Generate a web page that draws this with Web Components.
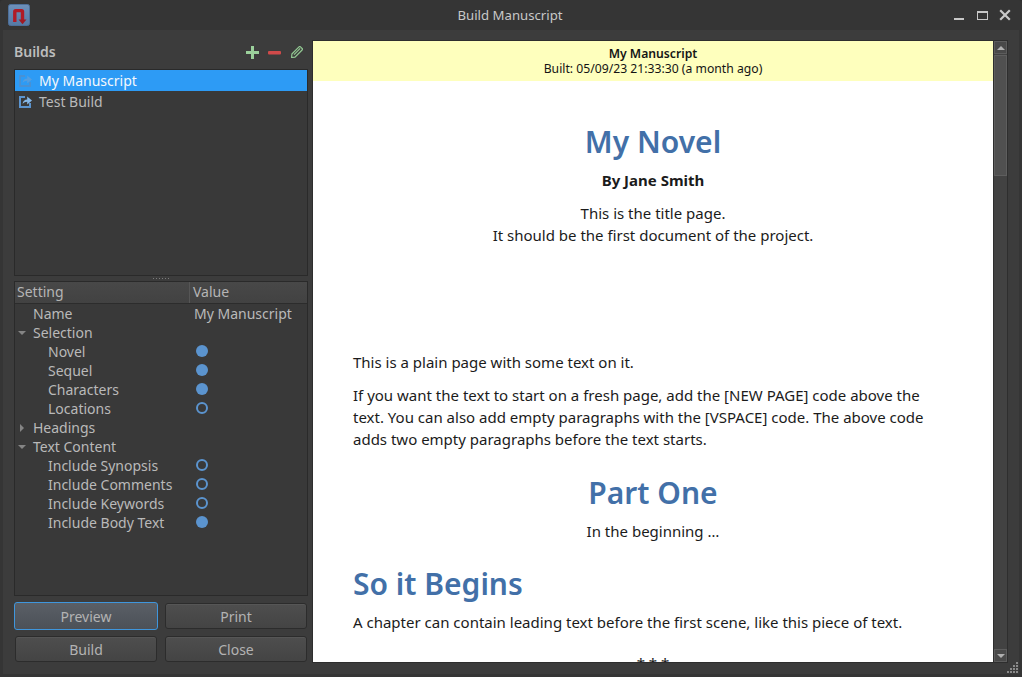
<!DOCTYPE html>
<html><head><meta charset="utf-8">
<style>
html,body{margin:0;padding:0;width:1022px;height:677px;overflow:hidden;background:#2f2f2f;font-family:"Noto Sans",sans-serif}
</style></head><body>
<template id="t-window"><style>
:host{display:flex;flex-direction:column;width:1022px;height:677px;background:#353535;color:#c4c4c4;font:14px "Noto Sans",sans-serif;border-radius:3px 3px 0 0;overflow:hidden}
.body{flex:1;min-height:0;margin:0 3px 3px 3px;background:#3c3c3c;display:flex;padding:11px 12px 12px 11px;position:relative}
.grip{position:absolute;right:0;bottom:0}
</style><slot name="title"></slot><div class="body"><slot></slot><svg class="grip" width="14" height="14" viewBox="0 0 14 14" fill="#8a8a8a"><rect x="11" y="2" width="2" height="2"/><rect x="8" y="5" width="2" height="2"/><rect x="11" y="5" width="2" height="2"/><rect x="5" y="8" width="2" height="2"/><rect x="8" y="8" width="2" height="2"/><rect x="11" y="8" width="2" height="2"/><rect x="2" y="11" width="2" height="2"/><rect x="5" y="11" width="2" height="2"/><rect x="8" y="11" width="2" height="2"/><rect x="11" y="11" width="2" height="2"/></svg></div></template>

<template id="t-title"><style>
:host{display:grid;grid-template-columns:1fr auto 1fr;align-items:center;height:30px;flex:none;padding:0 10px 0 8px;box-sizing:border-box;font-size:13.2px;color:#c8c8c8}
.ctl{display:flex;gap:9px;align-items:center;justify-self:end}
svg{display:block}
</style>
<svg width="22" height="22" viewBox="0 0 22 22"><defs><linearGradient id="g" x1="0" y1="0" x2="0" y2="1"><stop offset="0" stop-color="#6d90ba"/><stop offset="1" stop-color="#567aa5"/></linearGradient></defs><rect x="0.5" y="0.5" width="21" height="21" rx="2" fill="url(#g)" stroke="#4d6f99"/><path d="M6.8 18V7.5Q6.8 6.6 7.7 6.6H13.6Q14.5 6.6 14.5 7.5V16" fill="none" stroke="#b01a26" stroke-width="3.4"/><path d="M10.5 15.6h8l-4 4.6z" fill="#a01a24"/></svg>
<div><slot></slot></div>
<div class="ctl">
<svg width="14" height="14" viewBox="0 0 14 14"><rect x="2" y="10" width="10" height="2" fill="#c8c8c8"/></svg>
<svg width="14" height="14" viewBox="0 0 14 14"><rect x="2.5" y="3.5" width="10" height="8" fill="none" stroke="#c8c8c8"/><rect x="2" y="3" width="11" height="2" fill="#c8c8c8"/></svg>
<svg width="14" height="14" viewBox="0 0 14 14"><path d="M2.2 2.2l9.6 9.6M11.8 2.2l-9.6 9.6" stroke="#c8c8c8" stroke-width="2.2" fill="none"/></svg>
</div></template>

<template id="t-side"><style>
:host{display:flex;flex-direction:column;width:294px;flex:none;font-size:14px}
.head{display:flex;align-items:center;height:28px;box-sizing:border-box;flex:none;color:#bdbdbd;font-weight:600;font-size:14px;padding-bottom:6px}
.head span{flex:1;padding-bottom:2px}
.tools{display:flex;align-items:center;margin-right:5px}
svg{display:block}
.split{height:5px;flex:none;display:flex;justify-content:center;align-items:center}
.split i{width:18px;height:3px;background-image:radial-gradient(#7c7c7c 0.8px,transparent 1px);background-size:3px 3px}
.btns{display:grid;grid-template-columns:142px 142px;column-gap:8px;row-gap:7px;margin-top:7px;padding-left:1px}
</style>
<div class="head"><span>Builds</span><div class="tools">
<svg width="13" height="13" viewBox="0 0 13 13"><path d="M6.5 0v13M0 6.5h13" stroke="#9bd09b" stroke-width="3"/></svg>
<svg width="13" height="13" viewBox="0 0 13 13" style="margin-left:9px"><rect x="0" y="5" width="13" height="3.4" rx="1" fill="#d04a4a"/></svg>
<svg width="12" height="12" viewBox="0 0 12 12" style="margin-left:10px"><g fill="none" stroke="#93c993" stroke-width="1.2"><path d="M.9 8L8 .9c.5-.5 1-.5 1.5 0l1.6 1.6c.5.5.5 1 0 1.5L4 11.1l-3.4.4z"/><path d="M3 8.6L9.2 2.4"/></g></svg>
</div></div>
<slot name="list"></slot>
<div class="split"><i></i></div>
<slot name="tree"></slot>
<div class="btns"><slot name="btn"></slot></div>
</template>

<template id="t-list"><style>
:host{display:block;height:205px;flex:none;background:#393939;border:1px solid #2a2a2a}
</style><slot></slot></template>

<template id="t-item"><style>
:host{display:flex;align-items:center;height:21px;color:#b9b9b9;font-size:14px;padding-left:4px;gap:7px}
:host([selected]){background:#2d9bf5;color:#f4f8fc}
svg{display:block;flex:none}
:host([selected]) svg{opacity:.8}
:host([selected]) .box{stroke:#4f8fcc}
:host([selected]) .arr{fill:#5e9fdc}
</style><svg width="13" height="13" viewBox="0 0 13 13"><path class="box" d="M6 2H1v10h10V8" fill="none" stroke="#5b94cf" stroke-width="2"/><path class="arr" d="M3.6 9c.2-3 2.2-4.6 4.6-4.6V1.6L13 5.5 8.2 9.4V6.8C6.2 6.8 4.8 7.6 3.6 9z" fill="#86b8e8"/></svg><slot></slot></template>

<template id="t-tree"><style>
:host{display:flex;flex-direction:column;flex:1;min-height:0;background:#393939;border:1px solid #2a2a2a;color:#b9b9b9}
.hdr{display:flex;height:21px;flex:none;background:linear-gradient(#484848,#424242);border-bottom:1px solid #2c2c2c;font-size:14px;line-height:20px;color:#b5b5b5}
.hdr span{padding-left:2px;box-sizing:border-box}
.hdr span:first-child{width:175px;border-right:1px solid #565656}
.hdr span:last-child{flex:1;padding-left:3px}
</style><div class="hdr"><span>Setting</span><span>Value</span></div><div><slot></slot></div></template>

<template id="t-row"><style>
:host{display:grid;grid-template-columns:179px 1fr;height:19px;line-height:19px;font-size:14px;color:#b9b9b9}
.l{display:flex;align-items:center;white-space:nowrap}
.a{width:8px;height:19px;flex:none;margin-left:3px;margin-right:7px;display:flex;align-items:center;justify-content:center}
:host([child]) .l{padding-left:15px}
.v{display:flex;align-items:center}
.dot{width:12px;height:12px;border-radius:50%;background:#5b94cf;margin:-1px 0 0 2px;box-sizing:border-box}
:host([value="off"]) .dot{background:none;border:2px solid #5b94cf}
</style><div class="l"><span class="a"></span><slot></slot></div><div class="v"></div></template>

<template id="t-btn"><style>
:host{display:flex;align-items:center;justify-content:center;height:26px;box-sizing:border-box;border:1px solid #2c2c2c;border-radius:3px;background:linear-gradient(#4e4e4e,#444);color:#b3b3b3;font-size:14px;box-shadow:inset 0 1px 0 #565656}
:host([focus]){height:28px;margin:-1px;border-color:#3f96dd;background:linear-gradient(#5a5f66,#4c5158);box-shadow:none}
</style><slot></slot></template>

<template id="t-preview"><style>
:host{display:flex;flex:1;min-width:0;margin-left:5px;overflow:hidden;background:#fff;box-shadow:0 0 0 1px #2e2e2e}
.page{flex:1;min-width:0;display:flex;flex-direction:column;overflow:hidden;color:#1b1b1b}
.banner{flex:none;height:40px;background:#feffbd;text-align:center;color:#141414;font-size:12.2px;line-height:15px;padding-top:5px;box-sizing:border-box}
.banner b{display:block;font-weight:600}
</style><div class="page"><div class="banner"><b>My Manuscript</b>Built: 05/09/23 21:33:30 (a month ago)</div><slot></slot></div><slot name="bar"></slot></template>

<template id="t-doc"><style>
:host{display:block;padding:40px 40px 0;font-size:15px;line-height:22px;color:#1b1b1b}
</style><slot></slot></template>

<template id="t-bar"><style>
:host{display:flex;flex-direction:column;width:14px;flex:none;background:#424242;box-sizing:border-box;border-left:1px solid #2e2e2e}
.b{height:13px;flex:none;background:#494949;border:1px solid #5c5c5c;box-sizing:border-box;display:flex;align-items:center;justify-content:center}
.th{height:121px;flex:none;margin-top:1px;background:#505050;border:1px solid #5e5e5e;box-sizing:border-box}
.sp{flex:1}
i{display:block;width:0;height:0;border-left:4px solid transparent;border-right:4px solid transparent}
.up{border-bottom:4px solid #b0b0b0}.dn{border-top:4px solid #b0b0b0}
</style><div class="b"><i class="up"></i></div><div class="th"></div><div class="sp"></div><div class="b"><i class="dn"></i></div></template>

<app-window>
  <title-bar slot="title">Build Manuscript</title-bar>
  <side-panel>
    <build-list slot="list">
      <build-item selected>My Manuscript</build-item>
      <build-item>Test Build</build-item>
    </build-list>
    <settings-tree slot="tree">
      <tree-row data-name>Name</tree-row>
      <tree-row arrow="down">Selection</tree-row>
      <tree-row child value="on">Novel</tree-row>
      <tree-row child value="on">Sequel</tree-row>
      <tree-row child value="on">Characters</tree-row>
      <tree-row child value="off">Locations</tree-row>
      <tree-row arrow="right">Headings</tree-row>
      <tree-row arrow="down">Text Content</tree-row>
      <tree-row child value="off">Include Synopsis</tree-row>
      <tree-row child value="off">Include Comments</tree-row>
      <tree-row child value="off">Include Keywords</tree-row>
      <tree-row child value="on">Include Body Text</tree-row>
    </settings-tree>
    <push-button slot="btn" focus>Preview</push-button>
    <push-button slot="btn">Print</push-button>
    <push-button slot="btn">Build</push-button>
    <push-button slot="btn">Close</push-button>
  </side-panel>
  <manuscript-preview>
    <manuscript-doc>
      <h1 style="margin:0;text-align:center;font:600 30px/42px 'Noto Sans',sans-serif;color:#4270a8">My Novel</h1>
      <p style="margin:6px 0 0;text-align:center;font-weight:700;line-height:22px">By Jane Smith</p>
      <p style="margin:11px 0 0;text-align:center">This is the title page.<br>It should be the first document of the project.</p>
      <p style="margin:105px 0 0">This is a plain page with some text on it.</p>
      <p style="margin:11px 0 0">If you want the text to start on a fresh page, add the [NEW PAGE] code above the text. You can also add empty paragraphs with the [VSPACE] code. The above code adds two empty paragraphs before the text starts.</p>
      <h2 style="margin:22px 0 0;text-align:center;font:600 30px/42px 'Noto Sans',sans-serif;color:#4270a8">Part One</h2>
      <p style="margin:6px 0 0;text-align:center">In the beginning …</p>
      <h2 style="margin:21px 0 0;font:600 30px/42px 'Noto Sans',sans-serif;color:#4270a8">So it Begins</h2>
      <p style="margin:6px 0 0">A chapter can contain leading text before the first scene, like this piece of text.</p>
      <p style="margin:19px 0 0;text-align:center">* * *</p>
    </manuscript-doc>
    <scroll-bar slot="bar"></scroll-bar>
  </manuscript-preview>
</app-window>
<script>
const def=(n,t,f)=>customElements.define(n,class extends HTMLElement{constructor(){super();this.attachShadow({mode:'open'}).appendChild(document.getElementById(t).content.cloneNode(true));}connectedCallback(){f&&f(this)}});
def('app-window','t-window');def('title-bar','t-title');def('side-panel','t-side');def('build-list','t-list');def('build-item','t-item');def('settings-tree','t-tree');
def('tree-row','t-row',e=>{const s=e.shadowRoot;const a=e.getAttribute('arrow');if(a){s.querySelector('.a').innerHTML=a==='down'?'<svg width="8" height="8" viewBox="0 0 8 8"><path d="M0 2h8L4 6z" fill="#858585"/></svg>':'<svg width="8" height="8" viewBox="0 0 8 8"><path d="M2 0v8l4-4z" fill="#858585"/></svg>';}
const v=s.querySelector('.v');if(e.hasAttribute('value')){v.innerHTML='<div class="dot"></div>';}else if(e.hasAttribute('data-name')){v.textContent='My Manuscript';}});
def('push-button','t-btn');def('manuscript-preview','t-preview');def('manuscript-doc','t-doc');def('scroll-bar','t-bar');
</script>
</body></html>
